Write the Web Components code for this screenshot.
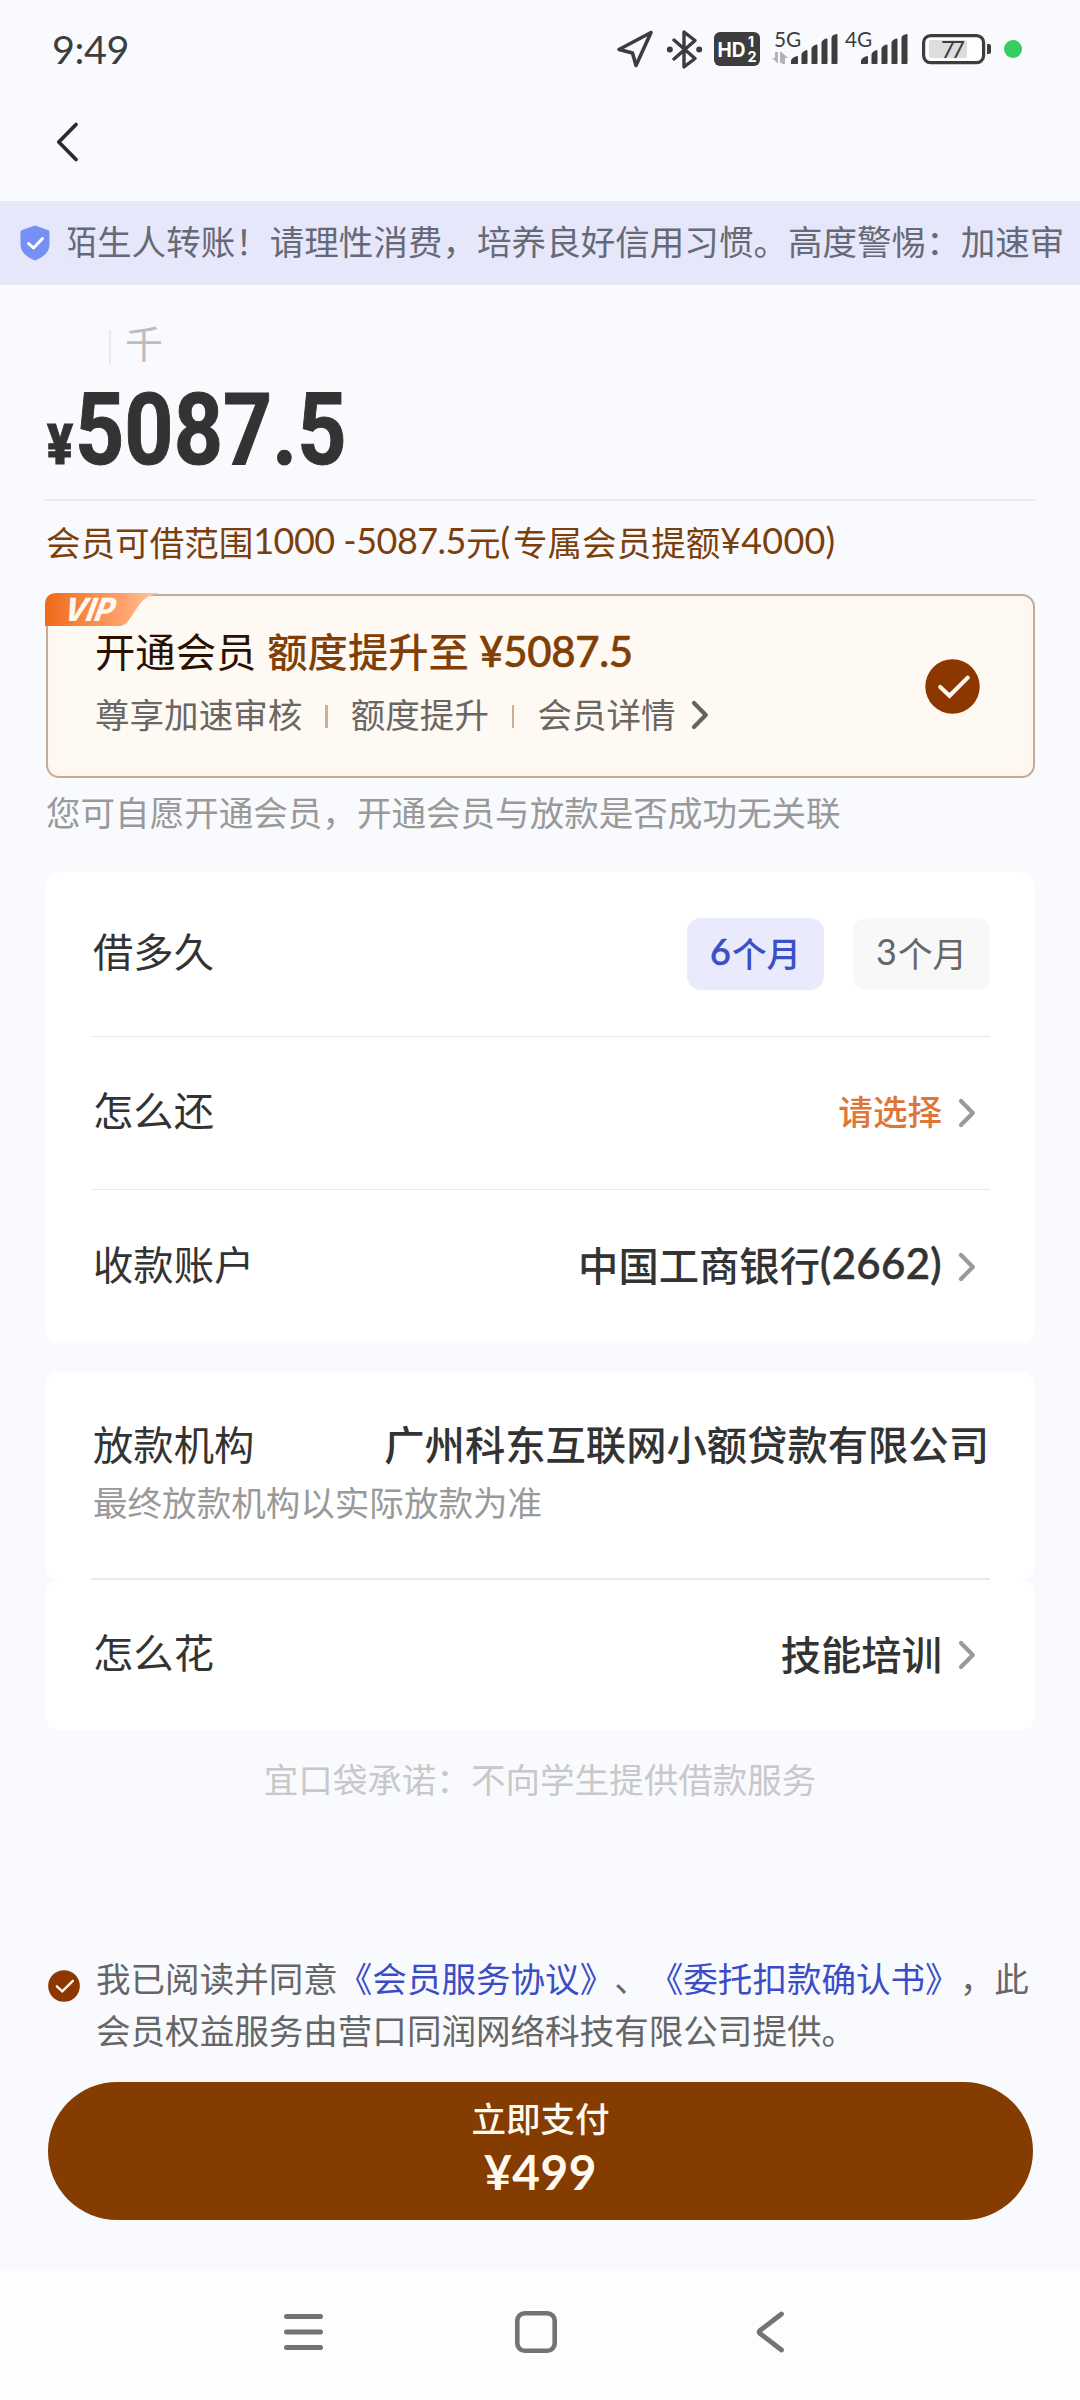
<!DOCTYPE html>
<html lang="zh-CN">
<head>
<meta charset="utf-8">
<title>借款</title>
<style>
  html, body { margin: 0; padding: 0; }
  body {
    width: 1080px;
    background: #f9fafe;
    font-family: Lato, "Noto Sans CJK SC", sans-serif;
    font-size: 34.56px;
    color: #333;
    text-spacing-trim: space-all;
  }
</style>
</head>
<body>
<loan-screen></loan-screen>
<script>
const define = (name, html, init) => {
  const tpl = document.createElement('template');
  tpl.innerHTML = html.trim();
  customElements.define(name, class extends HTMLElement {
    constructor() {
      super();
      this.attachShadow({ mode: 'open' }).append(tpl.content.cloneNode(true));
    }
    connectedCallback() { if (init) init(this, this.shadowRoot); }
  });
};

/* Latin run whose advance is spread over a given width */
define('num-run', `
  <style>
    :host { display: inline-block; font-size: 1.04em; line-height: 1; }
    :host([medium]) { -webkit-text-stroke: .6px currentColor; }
    span { white-space: pre; }
  </style><span><slot></slot></span>`, (el, root) => {
  const w = parseFloat(el.getAttribute('w'));
  const s = root.querySelector('span');
  const n = el.textContent.length;
  s.style.letterSpacing = (w - s.getBoundingClientRect().width) / n + 'px';
  el.style.width = w + 'px';
});

define('signal-bars', `
  <style>:host { display: block; width: 49px; height: 32px; } svg { display: block; }</style>
  <svg width="49" height="32" fill="#3c3d3c">
    <path d="M1 31v-3q0-3 6-5q1 0 1 1v6q0 1-1 1z"/>
    <path d="M11.500 31v-9q0-3 5-5q1 0 1 1v12q0 1-1 1z"/>
    <path d="M21.500 31v-15q0-3 5-4.500q1 0 1 1v17.500q0 1-1 1z"/>
    <path d="M31.500 31v-21q0-3 5-4.500q1 0 1 1v23.500q0 1-1 1z"/>
    <path d="M41.500 31v-26q0-3 5-4q1 0 1 1v28q0 1-1 1z"/>
  </svg>`);

define('status-bar', `
  <style>
    :host { display: flex; align-items: center; height: 98px; padding: 0 58px 0 52px; box-sizing: border-box; color: #3c3d3c; }
    .time { font-size: 38px; line-height: 48px; display: flex; align-items: center; }
    .icons { display: flex; align-items: center; margin-left: auto; }
    svg { display: block; flex: none; }
    .net { display: grid; grid-template-columns: 18px 49px; height: 34px; }
    .net.b { grid-template-columns: 15px 49px; }
    .net > * { grid-row: 1; }
    .gen { grid-column: 1; width: 0; display: flex; flex-direction: column; align-items: flex-start; gap: 2px; font-size: 20px; line-height: 20px; margin-top: -3px; }
    signal-bars { grid-column: 2; margin-top: 1px; }
  </style>
  <div class="time"><num-run w="77">9:49</num-run></div>
  <div class="icons">
    <svg width="38" height="38" viewBox="0 0 38 38" fill="none" stroke="#3c3d3c" stroke-width="3.600" stroke-linejoin="round"><path d="M35 2.500L3 19.500L16.500 23L20 35.500Z"/></svg>
    <svg style="margin-left:12px" width="37" height="39" viewBox="0 0 37 39" fill="none" stroke="#3c3d3c" stroke-width="3.400" stroke-linejoin="round" stroke-linecap="round"><path d="M8 10L29 28.500L18 37V2L29 10.500L8 29"/><circle cx="3.800" cy="19.500" r="3" fill="#3c3d3c" stroke="none"/><circle cx="33.200" cy="19.500" r="3" fill="#3c3d3c" stroke="none"/></svg>
    <svg style="margin-left:11px" width="46" height="34" viewBox="0 0 46 34"><rect width="46" height="34" rx="6" fill="#3c3d3c"/>
      <g fill="#fff" font-family="Inter, Lato, sans-serif" font-weight="700"><text x="3.500" y="24.500" font-size="20" textLength="28" lengthAdjust="spacingAndGlyphs">HD</text><text x="34" y="15" font-size="14">1</text><text x="33.500" y="29.500" font-size="14.500">2</text></g></svg>
    <div class="net" style="margin-left:12px">
      <div class="gen"><num-run w="27" style="margin-left:2px">5G</num-run>
        <svg width="16" height="12" fill="#b4b4b6"><path d="M0 6h3V0h3v11.500zM10 12V0.500L16 6h-3v6zM8 0h2v11h-2z"/></svg></div>
      <signal-bars></signal-bars>
    </div>
    <div class="net b" style="margin-left:6px">
      <div class="gen"><num-run w="27">4G</num-run></div>
      <signal-bars></signal-bars>
    </div>
    <svg style="margin-left:13px" width="70" height="32" viewBox="0 0 70 32"><rect x="1.600" y="2.600" width="60" height="27" rx="7" fill="#fdfdfe" stroke="#3c3d3c" stroke-width="3.200"/><rect x="7" y="7" width="38" height="18" rx="2" fill="#dddddd"/><path d="M65 11h2q2 0 2 2v6q0 2-2 2h-2z" fill="#3c3d3c"/><text x="19" y="24.500" font-family="Lato, sans-serif" font-size="24" textLength="24" fill="#3c3d3c">77</text></svg>
    <svg style="margin-left:12px" width="18" height="18"><circle cx="9" cy="9" r="9" fill="#36cd62"/></svg>
  </div>`);

define('nav-header', `
  <style>:host { display: flex; align-items: center; height: 103px; padding: 0 55px; box-sizing: border-box; padding-bottom: 16px; }</style>
  <svg width="26" height="42" viewBox="0 0 26 42" fill="none" stroke="#2b2b2b" stroke-width="3.800" stroke-linecap="round" stroke-linejoin="round"><path d="M21 3.500L3.800 21L21 38.500"/></svg>`);

define('notice-bar', `
  <style>
    :host { display: flex; align-items: center; height: 84px; background: #e6e7fb; color: #666a76; padding: 0 14px 0 20px; box-sizing: border-box; }
    svg { flex: none; display: block; }
    .clip { overflow: hidden; margin-left: 18px; flex: 1; display: flex; }
    .txt { white-space: nowrap; line-height: 60px; margin-left: -5.500px; padding-bottom: 3px; }
  </style>
  <svg width="30" height="36" viewBox="0 0 30 36"><path d="M15 0.500L28 5Q29.500 5.500 29.500 7V20Q29 30 15 35.500Q1 30 0.500 20V7Q0.500 5.500 2 5Z" fill="#7690f5"/><path d="M8.500 18.500L13.500 23L22.500 13.500" fill="none" stroke="#fff" stroke-width="3" stroke-linecap="round" stroke-linejoin="round"/></svg>
  <div class="clip"><div class="txt"><slot></slot></div></div>`);

define('amount-panel', `
  <style>
    :host { display: block; margin: 0 45px; }
    .hint { display: flex; align-items: center; height: 48px; padding: 36px 0 1px 64px; font-size: 38px; line-height: 48px; color: #bdbdbd; }
    .hint i { width: 2px; height: 35px; background: #e9e9ec; margin-right: 14px; margin-top: 4px; }
    .hint span { margin-top: -4px; }
    .sum { display: flex; align-items: baseline; height: 119px; line-height: 119px; font-family: Roboto, sans-serif; font-weight: 700; color: #333; padding-left: 2px; }
    .sum span { display: block; transform-origin: 0 50%; white-space: nowrap; }
    .yen { width: 28px; font-size: 56px; font-weight: 900; transform: scaleX(.86); -webkit-text-stroke: 1px #333; }
    .num { font-size: 101px; transform: scaleX(.851); -webkit-text-stroke: 1px #333; }
    .line { height: 2px; margin-top: 10px; background: #ececef; }
    .range { display: flex; align-items: center; height: 80px; padding-left: 1px; color: #7b3f0c; white-space: nowrap; }
  </style>
  <div class="hint"><i></i><span>千</span></div>
  <div class="sum"><span class="yen">¥</span><span class="num">5087.5</span></div>
  <div class="line"></div>
  <div class="range">会员可借范围<num-run w="212.6">1000 -5087.5</num-run>元<num-run w="12.6">(</num-run>专属会员提额<num-run w="115">¥4000)</num-run></div>`);

define('round-check', `
  <style>:host { display: block; flex: none; width: var(--size); height: var(--size); } svg { display: block; width: 100%; height: 100%; }</style>
  <svg viewBox="0 0 56 56"><circle cx="28" cy="28" r="27.700" fill="#8c3700"/><path d="M15.500 28.500L25 37.500L43.500 19" fill="none" stroke="#fff6ee" stroke-width="4.200" stroke-linecap="round"/></svg>`);

define('chevron-icon', `
  <style>:host { display: block; flex: none; } svg { display: block; }</style>
  <svg width="18" height="30" viewBox="0 0 18 30" fill="none" stroke="currentColor" stroke-width="4.200" stroke-linecap="round" stroke-linejoin="round"><path d="M3 3L14.800 15L3 27"/></svg>`);

define('vip-card', `
  <style>
    :host { display: flex; align-items: center; position: relative; height: 184px; margin: 13px 45px 0 46px; box-sizing: border-box; border: 2px solid #c3ab99; border-radius: 13px;
      background: #fff9f4; box-shadow: inset 0 0 16px #fff2e8; padding: 0 53px 0 47px; }
    .badge { position: absolute; left: -3px; top: -3px; display: block; overflow: visible; }
    .body { flex: 1; }
    .title { display: flex; align-items: center; font-size: 40.320px; line-height: 56px; height: 56px; color: #2b1000; margin-top: -9px; white-space: nowrap; }
    b { font-weight: 500; color: #7f3f06; display: flex; align-items: center; margin-left: 11px; }
    .sub { display: flex; align-items: center; line-height: 48px; margin-top: 11px; color: #6a6663; white-space: nowrap; }
    .sub i { width: 2.500px; height: 23px; background: #cfae92; margin: 3px 23px 0 23px; }
    chevron-icon { margin-left: 15px; color: #666360; }
    round-check { --size: 55px; }
  </style>
  <svg class="badge" width="116" height="33" viewBox="0 0 116 33"><defs><linearGradient id="g"><stop offset="0" stop-color="#ee6b1a"/><stop offset=".65" stop-color="#ff9f68"/><stop offset="1" stop-color="#ffc9a4"/></linearGradient></defs>
    <path d="M0 33V12Q0 0 12 0H115Q101 2 94 12L84 27Q80 33 74 33Z" fill="url(#g)"/>
    <text transform="translate(17.500 28) skewX(-12)" font-family="Inter, sans-serif" font-weight="800" font-style="italic" font-size="32" textLength="50" lengthAdjust="spacingAndGlyphs" fill="#fff8f0">VIP</text></svg>
  <div class="body">
    <div class="title">开通会员<b>额度提升至<num-run medium w="164"> ¥5087.5</num-run></b></div>
    <div class="sub">尊享加速审核<i></i>额度提升<i></i>会员详情<chevron-icon></chevron-icon></div>
  </div>
  <round-check></round-check>`);

define('form-card', `
  <style>:host { display: block; margin: 0 45px; padding: 0 45px 0 46px; background: #fff; border-radius: 14px; }</style><slot></slot>`);

define('form-row', `
  <style>
    :host { display: flex; box-sizing: border-box; align-items: center; justify-content: space-between; padding: 0 1px 4px 2px; height: var(--h, 153px); font-size: 40.320px; color: #333; white-space: nowrap; }
    :host([line]) { border-bottom: 1.500px solid #e9e9e9; }
    ::slotted([slot=label]) { margin-top: var(--lift, -5px); }
    .value { display: flex; align-items: center; font-weight: 500; }
  </style>
  <slot name="label"></slot><div class="value"><slot></slot></div>`);

define('term-pill', `
  <style>
    :host { display: flex; align-items: center; justify-content: center; width: 137px; height: 72px; box-sizing: border-box; padding: 0 0 4px 0; border-radius: 14px; background: #f8f8f8; color: #666; font-size: 34.560px; font-weight: 400; }
    :host([active]) { background: #e9ebfc; color: #3d4fc4; font-weight: 500; }
  </style><slot></slot>`);

define('agreement-line', `
  <style>
    :host { display: flex; margin: 0 45px 0 48px; color: #666; line-height: 52px; }
    round-check { --size: 32px; margin: 17px 16px 0 0; }
    p { margin: 0; white-space: nowrap; }
    a { color: #3b4dc6; }
  </style>
  <round-check></round-check>
  <p>我已阅读并同意<a>《会员服务协议》</a>、<a>《委托扣款确认书》</a>，此<br>会员权益服务由营口同润网络科技有限公司提供。</p>`);

define('pay-button', `
  <style>
    :host { display: flex; flex-direction: column; align-items: center; height: 138px; box-sizing: border-box; margin: 25px 47px 0 48px; padding-top: 13px; border-radius: 69px; background: #853c00; color: #fffaf0; font-weight: 500; }
    div { line-height: 48px; }
    .price { display: flex; align-items: center; font-size: 46px; height: 54px; margin-top: 2px; font-weight: 700; }
  </style>
  <div>立即支付</div><div class="price"><num-run w="113">¥499</num-run></div>`);

define('system-nav', `
  <style>
    :host { display: flex; align-items: center; height: 130px; box-sizing: border-box; padding: 0 294px 6px 281px; background: #fdfdfd; margin-top: 50px; }
    svg { display: block; }
  </style>
  <svg width="44" height="44" stroke="#737373" stroke-width="5" stroke-linecap="round"><path d="M5.500 6.500H39.500M5.500 22H39.500M5.500 37.500H39.500"/></svg>
  <svg style="margin-left:189px" width="44" height="44" fill="none" stroke="#737373" stroke-width="4.600"><rect x="3.300" y="3.300" width="37.400" height="37.400" rx="7.500"/></svg>
  <svg style="margin-left:196px" width="32" height="44" fill="none" stroke="#737373" stroke-width="4.800" stroke-linecap="round" stroke-linejoin="round"><path d="M27.500 4L6 20.500Q4 22 6 23.500L27.500 40"/></svg>`);

define('loan-screen', `
  <style>
    :host { display: block; width: 1080px; height: 2400px; overflow: hidden; background: #f9fafe; }
    .tip { height: 94px; padding: 0 46px; line-height: 70px; color: #999; box-sizing: border-box; white-space: nowrap; }
    .gap { height: 29px; }
    chevron-icon { margin: 4px 13px 0 16px; color: #9a9a9a; }
    .pick { color: #de7638; font-size: 34.560px; margin-top: -2px; }
    .val { margin-top: -2px; display: flex; align-items: center; }
    .pills { display: flex; gap: 29px; margin: 4px -1px 0 0; }
    .org { padding-top: 43px; height: 208px; box-sizing: border-box; }
    .sub { color: #999; line-height: 56px; padding: 2px 0 0 2px; }
    .promise { text-align: center; color: #c8c8ca; line-height: 60px; height: 223px; box-sizing: border-box; padding-top: 20px; }
    .hr { height: 1.500px; background: #e9e9e9; margin-top: 47px; }
  </style>
  <status-bar></status-bar>
  <nav-header></nav-header>
  <notice-bar>陌生人转账！请理性消费，培养良好信用习惯。高度警惕：加速审</notice-bar>
  <amount-panel></amount-panel>
  <vip-card></vip-card>
  <div class="tip">您可自愿开通会员，开通会员与放款是否成功无关联</div>
  <form-card>
    <form-row line style="--h:165px"><span slot="label">借多久</span><div class="pills"><term-pill active><num-run medium w="22">6</num-run>个月</term-pill><term-pill><num-run w="22">3</num-run>个月</term-pill></div></form-row>
    <form-row line><span slot="label">怎么还</span><span class="pick">请选择</span><chevron-icon></chevron-icon></form-row>
    <form-row><span slot="label">收款账户</span><div class="val">中国工商银行<num-run medium w="122">(2662)</num-run></div><chevron-icon></chevron-icon></form-row>
  </form-card>
  <div class="gap"></div>
  <form-card class="org">
    <form-row style="--h:58px;--lift:0px"><span slot="label">放款机构</span><span>广州科东互联网小额贷款有限公司</span></form-row>
    <div class="sub">最终放款机构以实际放款为准</div>
    <div class="hr"></div>
  </form-card>
  <form-card>
    <form-row style="--h:150px"><span slot="label">怎么花</span><span class="val">技能培训</span><chevron-icon></chevron-icon></form-row>
  </form-card>
  <div class="promise">宜口袋承诺：不向学生提供借款服务</div>
  <agreement-line></agreement-line>
  <pay-button></pay-button>
  <system-nav></system-nav>
`);
</script>
</body>
</html>
